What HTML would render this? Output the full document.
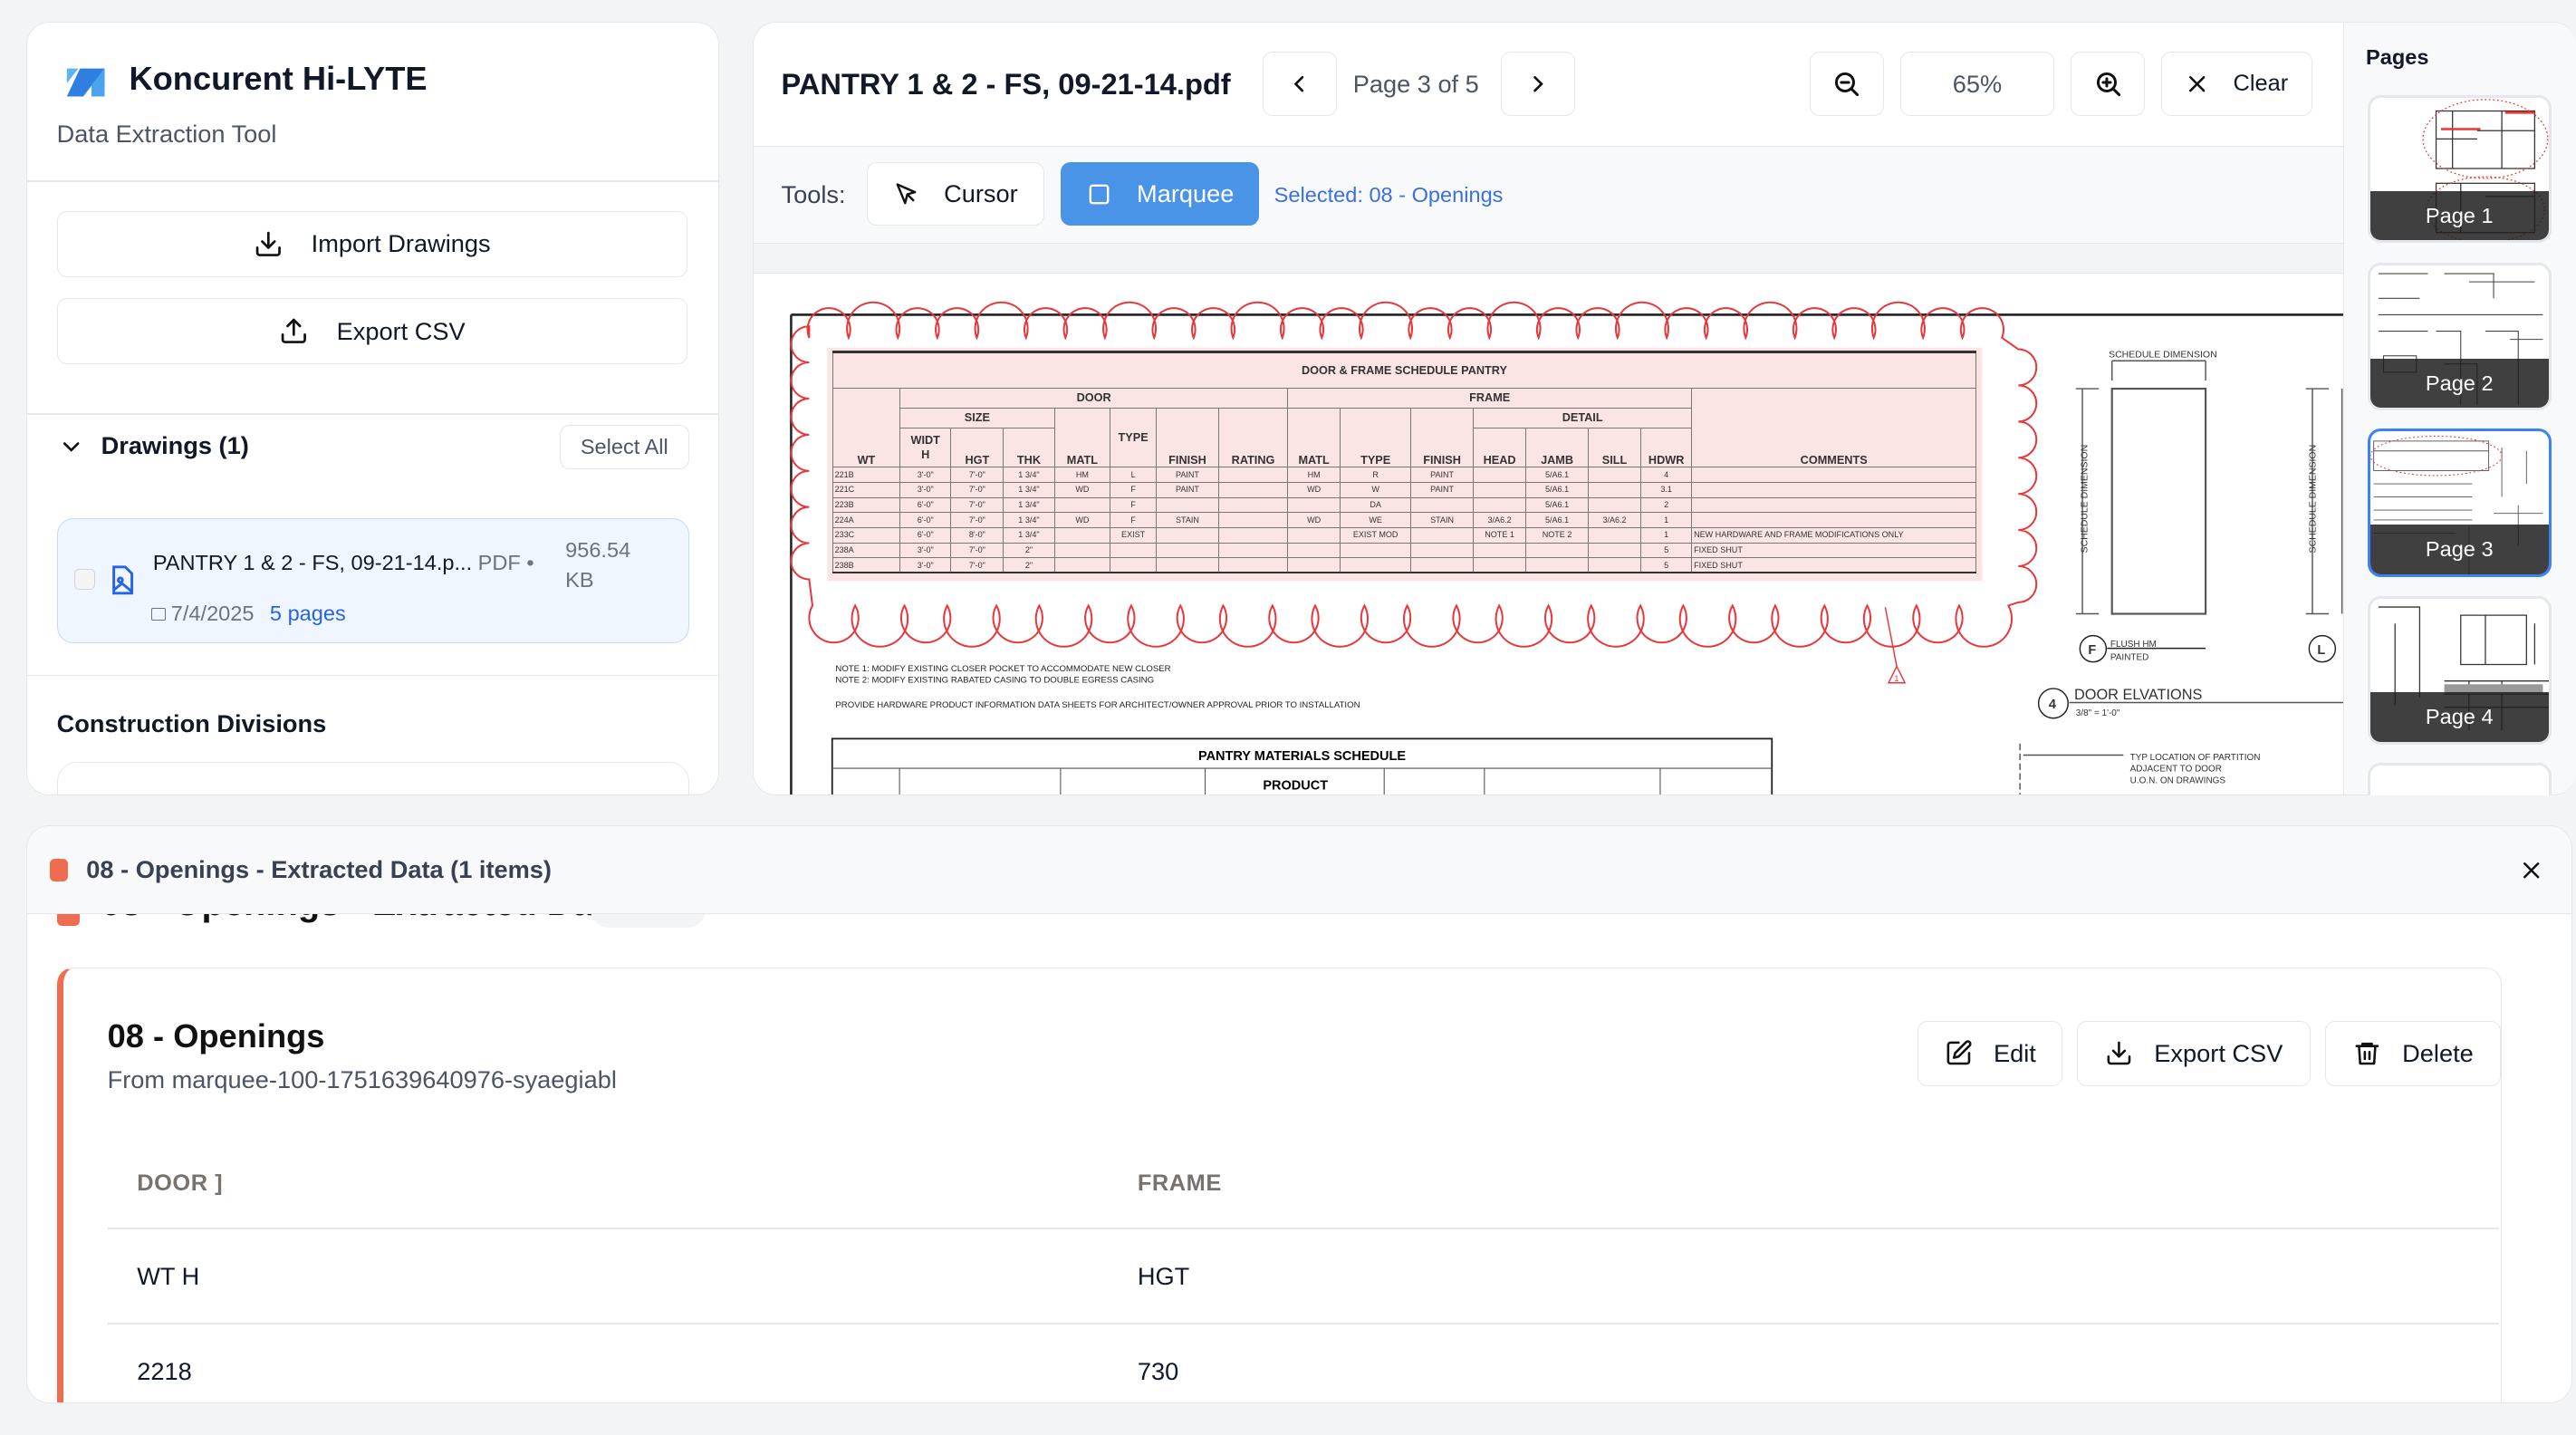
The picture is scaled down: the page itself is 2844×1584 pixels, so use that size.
<!DOCTYPE html>
<html><head><meta charset="utf-8">
<style>
*{box-sizing:border-box;margin:0;padding:0}
html,body{width:2844px;height:1584px;overflow:hidden;background:#f3f4f6}
#w{zoom:1.81378;width:1568px;height:874px;position:relative;font-family:"Liberation Sans",sans-serif;color:#111827}
.a{position:absolute}
.card{position:absolute;background:#fff;border:1px solid #e5e7eb;border-radius:14px;overflow:hidden}
.btn{position:absolute;background:#fff;border:1px solid #e5e7eb;border-radius:6px;display:flex;align-items:center;justify-content:center;font-size:15px;color:#111827}
.hl{position:absolute;height:1px;background:#e5e7eb}
svg{display:block}
.t{position:absolute;white-space:nowrap}
table.ds{position:absolute;border-collapse:collapse;font-family:"Liberation Sans",sans-serif;font-size:5px;color:#333;background:#fbe5e4;table-layout:fixed}
table.ds td{border:0.5px solid #777;padding:0 1px;height:9.2px;line-height:8px;overflow:hidden;white-space:nowrap;text-align:center}
table.ds tr.h td{font-size:7px;font-weight:bold}
.thumb{position:absolute;left:1441px;width:112px;height:90px;border:2px solid #e5e7eb;border-radius:8px;background:#fff;overflow:hidden}
.thumb .lb{position:absolute;left:0;right:0;bottom:0;height:30px;background:rgba(30,30,30,.85);color:#fff;font-size:13px;text-align:center;line-height:30px}
</style></head><body><div id="w">

<!-- Left card -->
<div class="card" style="left:16px;top:13px;width:422px;height:471px">
  <svg class="a" style="left:23px;top:26px" width="26" height="20" viewBox="0 0 26 20">
    <path d="M1 2h7l-7 9z" fill="#5bb6ef"/><path d="M9 2h15L11 19H1z" fill="#2f7fe0"/><path d="M16 12l8-10v17h-8z" fill="#4aa3ec"/>
  </svg>
  <div class="t" style="left:62px;top:23px;font-size:20px;font-weight:600;color:#111827">Koncurent Hi-LYTE</div>
  <div class="t" style="left:18px;top:59px;font-size:15px;color:#4b5563">Data Extraction Tool</div>
  <div class="hl" style="left:0;right:0;top:96px"></div>
  <div class="btn" style="left:18px;top:115px;width:384px;height:40px">
    <svg width="18" height="18" viewBox="0 0 24 24" fill="none" stroke="#111" stroke-width="2" stroke-linecap="round" stroke-linejoin="round" style="margin-right:17px"><path d="M21 15v4a2 2 0 0 1-2 2H5a2 2 0 0 1-2-2v-4"/><path d="M7 10l5 5 5-5"/><path d="M12 15V3"/></svg>Import Drawings</div>
  <div class="btn" style="left:18px;top:168px;width:384px;height:40px">
    <svg width="18" height="18" viewBox="0 0 24 24" fill="none" stroke="#111" stroke-width="2" stroke-linecap="round" stroke-linejoin="round" style="margin-right:17px"><path d="M21 15v4a2 2 0 0 1-2 2H5a2 2 0 0 1-2-2v-4"/><path d="M17 8l-5-5-5 5"/><path d="M12 3v12"/></svg>Export CSV</div>
  <div class="hl" style="left:0;right:0;top:238px"></div>
  <svg class="a" style="left:20px;top:251px" width="14" height="14" viewBox="0 0 24 24" fill="none" stroke="#111" stroke-width="2.5" stroke-linecap="round"><path d="M5 9l7 7 7-7"/></svg>
  <div class="t" style="left:45px;top:249px;font-size:15px;font-weight:600">Drawings (1)</div>
  <div class="btn" style="left:324px;top:245px;width:79px;height:27px;font-size:13px;color:#4b5563">Select All</div>
  <div class="a" style="left:18px;top:302px;width:385px;height:76px;background:#eff6ff;border:1px solid #bfdbfe;border-radius:10px">
    <div class="a" style="left:10px;top:30px;width:13px;height:13px;border:1px solid #d1d5db;border-radius:3px;background:#f3f4f6"></div>
    <svg class="a" style="left:32px;top:28px" width="15" height="18" viewBox="0 0 15 18" fill="none" stroke="#2563eb" stroke-width="1.6"><path d="M2 1h7l4 4v12H2z"/><circle cx="6" cy="9" r="1.3"/><path d="M2 15l5-4 6 5"/></svg>
    <div class="t" style="left:58px;top:19px;font-size:13px;color:#111827">PANTRY 1 &amp; 2 - FS, 09-21-14.p...<span style="color:#6b7280"> PDF •</span></div>
    <div class="t" style="left:309px;top:10px;font-size:13px;color:#6b7280;line-height:18px">956.54<br>KB</div>
    <div class="t" style="left:57px;top:50px;font-size:13px;color:#6b7280"><span style="display:inline-block;width:9px;height:8px;border:1px solid #6b7280;border-radius:1px;margin-right:3px"></span>7/4/2025 <span style="color:#2563eb;margin-left:6px">5 pages</span></div>
  </div>
  <div class="hl" style="left:0;right:0;top:397px"></div>
  <div class="t" style="left:18px;top:418px;font-size:15px;font-weight:600">Construction Divisions</div>
  <div class="a" style="left:18px;top:450px;width:385px;height:40px;border:1px solid #e5e7eb;border-radius:12px"></div>
</div>

<!-- Main card -->
<div class="card" style="left:458px;top:13px;width:1110px;height:471px;border-right:none">
  <div class="t" style="left:17px;top:27px;font-size:18px;font-weight:600">PANTRY 1 &amp; 2 - FS, 09-21-14.pdf</div>
  <div class="btn" style="left:310px;top:18px;width:45px;height:39px"><svg width="14" height="14" viewBox="0 0 24 24" fill="none" stroke="#111" stroke-width="2.5" stroke-linecap="round"><path d="M15 5l-7 7 7 7"/></svg></div>
  <div class="t" style="left:365px;top:29px;font-size:15px;color:#4b5563">Page 3 of 5</div>
  <div class="btn" style="left:455px;top:18px;width:45px;height:39px"><svg width="14" height="14" viewBox="0 0 24 24" fill="none" stroke="#111" stroke-width="2.5" stroke-linecap="round"><path d="M9 5l7 7-7 7"/></svg></div>
  <div class="btn" style="left:643px;top:18px;width:45px;height:39px"><svg width="18" height="18" viewBox="0 0 24 24" fill="none" stroke="#111" stroke-width="2.2" stroke-linecap="round"><circle cx="11" cy="11" r="7"/><path d="M8 11h6M16 16l5 5"/></svg></div>
  <div class="btn" style="left:698px;top:18px;width:94px;height:39px;color:#4b5563">65%</div>
  <div class="btn" style="left:802px;top:18px;width:45px;height:39px"><svg width="18" height="18" viewBox="0 0 24 24" fill="none" stroke="#111" stroke-width="2.2" stroke-linecap="round"><circle cx="11" cy="11" r="7"/><path d="M8 11h6M11 8v6M16 16l5 5"/></svg></div>
  <div class="btn" style="left:857px;top:18px;width:92px;height:39px;font-size:14px"><svg width="14" height="14" viewBox="0 0 24 24" fill="none" stroke="#111" stroke-width="2.4" stroke-linecap="round" style="margin-right:15px"><path d="M5 5l14 14M19 5L5 19"/></svg>Clear</div>
  <div class="a" style="left:0;top:75px;width:968px;height:60px;background:#f8f9fa;border-top:1px solid #e5e7eb;border-bottom:1px solid #e5e7eb"></div>
  <div class="t" style="left:17px;top:96px;font-size:15px;color:#374151">Tools:</div>
  <div class="btn" style="left:69px;top:85px;width:108px;height:39px"><svg width="16" height="16" viewBox="0 0 24 24" fill="none" stroke="#111" stroke-width="2" stroke-linejoin="round" style="margin-right:15px"><path d="M4 3l16 7-7 2-2 8z"/><path d="M13 12l6 6"/></svg>Cursor</div>
  <div class="btn" style="left:187px;top:85px;width:121px;height:39px;background:#4a94e8;border-color:#4a94e8;color:#fff"><svg width="16" height="16" viewBox="0 0 24 24" fill="none" stroke="#fff" stroke-width="2" style="margin-right:15px"><rect x="4" y="4" width="16" height="16" rx="2"/></svg>Marquee</div>
  <div class="t" style="left:317px;top:98px;font-size:13px;color:#3b6fe0">Selected: 08 - Openings</div>
  <div class="a" style="left:0;top:135px;width:968px;height:18px;background:#f3f4f6;border-bottom:1px solid #e5e7eb"></div>

  <!-- drawing -->
  <div class="a" style="left:0;top:153px;width:968px;height:318px;overflow:hidden;background:#fff">
    <svg class="a" style="left:-458px;top:-166px" width="1426" height="490" viewBox="0 0 1426 490">
      <path d="M481 191H1426M481 191V490" stroke="#222" stroke-width="1.4" fill="none"/>
      <rect x="503" y="211" width="703" height="142" fill="#fbe5e4"/>
      <path id="cloud" d="" fill="none" stroke="#e8363a" stroke-width="1.1"/>
      <path d="M1147 369L1154 405" stroke="#e8363a" stroke-width="0.8"/>
      <path d="M1154 405l-5 10h10z" fill="none" stroke="#e8363a" stroke-width="0.8"/>
      <text x="1152.5" y="414" font-size="5" fill="#e8363a">1</text>
      <g font-family="Liberation Sans" font-size="5.3" fill="#222">
        <text x="508" y="408">NOTE 1: MODIFY EXISTING CLOSER POCKET TO ACCOMMODATE NEW CLOSER</text>
        <text x="508" y="415">NOTE 2: MODIFY EXISTING RABATED CASING TO DOUBLE EGRESS CASING</text>
        <text x="508" y="430">PROVIDE HARDWARE PRODUCT INFORMATION DATA SHEETS FOR ARCHITECT/OWNER APPROVAL PRIOR TO INSTALLATION</text>
      </g>
      <rect x="506" y="449" width="572" height="50" fill="none" stroke="#222" stroke-width="1"/>
      <path d="M506 467H1078M547 467V490M645 467V490M733 467V490M842 467V490M903 467V490M1010 467V490" stroke="#555" stroke-width="0.6"/>
      <text x="792" y="462" font-size="8" font-weight="bold" text-anchor="middle" font-family="Liberation Sans">PANTRY MATERIALS SCHEDULE</text>
      <text x="788" y="480" font-size="8" font-weight="bold" text-anchor="middle" font-family="Liberation Sans">PRODUCT</text>
      <g stroke="#555" fill="none" stroke-width="0.8">
        <rect x="1285" y="236" width="57" height="137" stroke-width="1.2"/>
        <path d="M1285 219h57M1285 219v12M1342 219v12M1267 236v137M1263 236h14M1263 373h14"/>
        <path d="M1407 236v137M1403 236h14M1403 373h14M1425 236v137"/>
        <circle cx="1273.5" cy="394.3" r="8" stroke="#222"/>
        <path d="M1282 394h60" stroke="#222"/>
        <circle cx="1413" cy="394.3" r="8" stroke="#222"/>
        <circle cx="1249.3" cy="427.5" r="9" stroke="#222"/>
        <path d="M1259 427h167"/>
        <path d="M1229 452v40" stroke-dasharray="4 2"/>
        <path d="M1231 459h61"/>
      </g>
      <g font-family="Liberation Sans" fill="#333">
        <text x="1283" y="217" font-size="5.8">SCHEDULE DIMENSION</text>
        <text x="1270" y="336" font-size="5.8" transform="rotate(-90 1270 336)">SCHEDULE DIMENSION</text>
        <text x="1409" y="336" font-size="5.8" transform="rotate(-90 1409 336)">SCHEDULE DIMENSION</text>
        <text x="1270.5" y="397.5" font-size="8" font-weight="bold">F</text>
        <text x="1410" y="397.5" font-size="8" font-weight="bold">L</text>
        <text x="1284" y="393" font-size="5.5">FLUSH HM</text>
        <text x="1284" y="401" font-size="5.5">PAINTED</text>
        <text x="1246.5" y="430.5" font-size="8" font-weight="bold">4</text>
        <text x="1262" y="425" font-size="9">DOOR ELVATIONS</text>
        <text x="1263" y="435" font-size="5.5">3/8" = 1'-0"</text>
        <text x="1296" y="462" font-size="5.5">TYP LOCATION OF PARTITION</text>
        <text x="1296" y="469" font-size="5.5">ADJACENT TO DOOR</text>
        <text x="1296" y="476" font-size="5.5">U.O.N. ON DRAWINGS</text>
      </g>
    </svg>
    <table class="ds" style="left:48px;top:47px;width:696px">
      <colgroup><col style="width:41px"><col style="width:31px"><col style="width:32px"><col style="width:31px"><col style="width:34px"><col style="width:28px"><col style="width:38px"><col style="width:42px"><col style="width:32px"><col style="width:43px"><col style="width:38px"><col style="width:32px"><col style="width:38px"><col style="width:32px"><col style="width:31px"><col style="width:173px"></colgroup>
      <tr class="h"><td colspan="16" style="height:22px;border-top:2px solid #333">DOOR &amp; FRAME SCHEDULE PANTRY</td></tr>
      <tr class="h"><td rowspan="3" style="vertical-align:bottom">WT</td><td colspan="7" style="height:12px">DOOR</td><td colspan="7">FRAME</td><td rowspan="3" style="vertical-align:bottom">COMMENTS</td></tr>
      <tr class="h"><td colspan="3" style="height:12px">SIZE</td><td rowspan="2" style="vertical-align:bottom">MATL</td><td rowspan="2">TYPE</td><td rowspan="2" style="vertical-align:bottom">FINISH</td><td rowspan="2" style="vertical-align:bottom">RATING</td><td rowspan="2" style="vertical-align:bottom">MATL</td><td rowspan="2" style="vertical-align:bottom">TYPE</td><td rowspan="2" style="vertical-align:bottom">FINISH</td><td colspan="4">DETAIL</td></tr>
      <tr class="h"><td style="height:24px;line-height:9px">WIDT<br>H</td><td style="vertical-align:bottom">HGT</td><td style="vertical-align:bottom">THK</td><td style="vertical-align:bottom">HEAD</td><td style="vertical-align:bottom">JAMB</td><td style="vertical-align:bottom">SILL</td><td style="vertical-align:bottom">HDWR</td></tr>
      <tr><td style="text-align:left">221B</td><td>3'-0"</td><td>7'-0"</td><td>1 3/4"</td><td>HM</td><td>L</td><td>PAINT</td><td></td><td>HM</td><td>R</td><td>PAINT</td><td></td><td>5/A6.1</td><td></td><td>4</td><td></td></tr>
      <tr><td style="text-align:left">221C</td><td>3'-0"</td><td>7'-0"</td><td>1 3/4"</td><td>WD</td><td>F</td><td>PAINT</td><td></td><td>WD</td><td>W</td><td>PAINT</td><td></td><td>5/A6.1</td><td></td><td>3.1</td><td></td></tr>
      <tr><td style="text-align:left">223B</td><td>6'-0"</td><td>7'-0"</td><td>1 3/4"</td><td></td><td>F</td><td></td><td></td><td></td><td>DA</td><td></td><td></td><td>5/A6.1</td><td></td><td>2</td><td></td></tr>
      <tr><td style="text-align:left">224A</td><td>6'-0"</td><td>7'-0"</td><td>1 3/4"</td><td>WD</td><td>F</td><td>STAIN</td><td></td><td>WD</td><td>WE</td><td>STAIN</td><td>3/A6.2</td><td>5/A6.1</td><td>3/A6.2</td><td>1</td><td></td></tr>
      <tr><td style="text-align:left">233C</td><td>6'-0"</td><td>8'-0"</td><td>1 3/4"</td><td></td><td>EXIST</td><td></td><td></td><td></td><td>EXIST MOD</td><td></td><td>NOTE 1</td><td>NOTE 2</td><td></td><td>1</td><td style="text-align:left">NEW HARDWARE AND FRAME MODIFICATIONS ONLY</td></tr>
      <tr><td style="text-align:left">238A</td><td>3'-0"</td><td>7'-0"</td><td>2"</td><td></td><td></td><td></td><td></td><td></td><td></td><td></td><td></td><td></td><td></td><td>5</td><td style="text-align:left">FIXED SHUT</td></tr>
      <tr><td style="text-align:left;border-bottom:1.5px solid #333">238B</td><td style="border-bottom:1.5px solid #333">3'-0"</td><td style="border-bottom:1.5px solid #333">7'-0"</td><td style="border-bottom:1.5px solid #333">2"</td><td style="border-bottom:1.5px solid #333"></td><td style="border-bottom:1.5px solid #333"></td><td style="border-bottom:1.5px solid #333"></td><td style="border-bottom:1.5px solid #333"></td><td style="border-bottom:1.5px solid #333"></td><td style="border-bottom:1.5px solid #333"></td><td style="border-bottom:1.5px solid #333"></td><td style="border-bottom:1.5px solid #333"></td><td style="border-bottom:1.5px solid #333"></td><td style="border-bottom:1.5px solid #333"></td><td style="border-bottom:1.5px solid #333">5</td><td style="text-align:left;border-bottom:1.5px solid #333">FIXED SHUT</td></tr>
    </table>
  </div>

  <div class="a" style="left:968px;top:0;width:142px;height:471px;background:#f8f9fa;border-left:1px solid #e5e7eb">
    <div class="t" style="left:13px;top:14px;font-size:13px;font-weight:600">Pages</div>
  </div>
</div>

<div class="thumb" style="top:58px"><svg width="112" height="90"><g stroke="#333" stroke-width="0.7" fill="none"><rect x="40" y="8" width="60" height="35"/><path d="M50 8v35M65 20h35M80 8v35M40 25h25"/><rect x="40" y="52" width="60" height="30"/><path d="M55 52v30M70 60h30"/></g><g stroke="#e33" stroke-width="0.7" fill="none" stroke-dasharray="1 1.5"><ellipse cx="70" cy="25" rx="38" ry="24"/><ellipse cx="70" cy="68" rx="36" ry="20"/></g><path d="M43 19h24M82 9h18" stroke="#e33" stroke-width="1.4"/></svg><div class="lb">Page 1</div></div>
<div class="thumb" style="top:160px"><svg width="112" height="90"><g stroke="#444" stroke-width="0.6" fill="none"><path d="M5 5h30M45 5h30v15M5 20h25M5 40h30M40 40h15v45M45 60h20v25M70 40h20v45M85 45h20"/><rect x="8" y="55" width="20" height="10"/><path d="M5 30h100M60 10h40"/></g></svg><div class="lb">Page 2</div></div>
<div class="thumb" style="top:261px;border-color:#3b82f6"><svg width="112" height="90"><g stroke="#555" stroke-width="0.5" fill="none"><rect x="2" y="6" width="70" height="18"/><path d="M2 12h70M2 32h60M2 40h60M2 48h60M2 54h60M80 10v30M95 12v20M75 50h30M90 45v25M2 62h50M60 58v30"/></g><ellipse cx="40" cy="15" rx="40" ry="12" fill="none" stroke="#e33" stroke-width="0.6" stroke-dasharray="1 1.5"/></svg><div class="lb">Page 3</div></div>
<div class="thumb" style="top:363px"><svg width="112" height="90"><g stroke="#333" stroke-width="0.7" fill="none"><path d="M5 5h25v55M15 15v50M55 10h40v30H55zM70 10v30M100 15v25M45 50h65M45 58h65M45 66h65M60 50v30M80 50v30"/></g><rect x="45" y="52" width="60" height="6" fill="#999"/></svg><div class="lb">Page 4</div></div>
<div class="thumb" style="top:464px;height:20px;border-bottom:none;border-radius:8px 8px 0 0"></div>

<!-- bottom panel -->
<div class="card" style="left:16px;top:502px;width:1550px;height:352px">
  <div class="a" style="left:0;top:0;right:0;height:54px;background:#f8f9fa;border-bottom:1px solid #e5e7eb;z-index:2">
    <div class="a" style="left:14px;top:20px;width:11px;height:14px;background:#ef6c50;border-radius:3px"></div>
    <div class="t" style="left:36px;top:18px;font-size:15px;font-weight:600;color:#374151">08 - Openings - Extracted Data (1 items)</div>
    <svg class="a" style="left:1517px;top:20px" width="14" height="14" viewBox="0 0 24 24" fill="none" stroke="#111" stroke-width="2.4" stroke-linecap="round"><path d="M5 5l14 14M19 5L5 19"/></svg>
  </div>
  <div class="a" style="left:18px;top:38px;width:14px;height:23px;background:#ef6c50;border-radius:3px"></div>
  <div class="t" style="left:45px;top:35px;font-size:22px;font-weight:bold;color:#111">08 - Openings - Extracted Data</div>
  <div class="a" style="left:343px;top:40px;width:70px;height:22px;background:#f3f4f6;border-radius:11px;font-size:12px;text-align:center;line-height:16px">1 items</div>
  <div class="a" style="left:18px;top:86px;width:1488px;height:300px;border:1px solid #e5e7eb;border-left:4px solid #ef6c50;border-radius:10px">
    <div class="t" style="left:27px;top:30px;font-size:20px;font-weight:600;color:#111">08 - Openings</div>
    <div class="t" style="left:27px;top:59px;font-size:15px;color:#4b5563">From marquee-100-1751639640976-syaegiabl</div>
    <div class="btn" style="left:1129px;top:32px;width:88px;height:40px"><svg width="17" height="17" viewBox="0 0 24 24" fill="none" stroke="#111" stroke-width="2" stroke-linecap="round" stroke-linejoin="round" style="margin-right:13px"><path d="M12 3H5a2 2 0 0 0-2 2v14a2 2 0 0 0 2 2h14a2 2 0 0 0 2-2v-7"/><path d="M18.4 2.6a2.1 2.1 0 0 1 3 3L12 15l-4 1 1-4z"/></svg>Edit</div>
    <div class="btn" style="left:1226px;top:32px;width:142px;height:40px"><svg width="17" height="17" viewBox="0 0 24 24" fill="none" stroke="#111" stroke-width="2" stroke-linecap="round" stroke-linejoin="round" style="margin-right:13px"><path d="M21 15v4a2 2 0 0 1-2 2H5a2 2 0 0 1-2-2v-4"/><path d="M7 10l5 5 5-5"/><path d="M12 15V3"/></svg>Export CSV</div>
    <div class="btn" style="left:1377px;top:32px;width:107px;height:40px"><svg width="17" height="17" viewBox="0 0 24 24" fill="none" stroke="#111" stroke-width="2" stroke-linecap="round" stroke-linejoin="round" style="margin-right:13px"><path d="M3 6h18M8 6V4h8v2M5 6l1 15h12l1-15M10 11v6M14 11v6"/></svg>Delete</div>
    <div class="t" style="left:45px;top:123px;font-size:14px;font-weight:600;color:#78716c;letter-spacing:.3px">DOOR ]</div>
    <div class="t" style="left:654px;top:123px;font-size:14px;font-weight:600;color:#78716c;letter-spacing:.3px">FRAME</div>
    <div class="hl" style="left:27px;width:1456px;top:158px"></div>
    <div class="t" style="left:45px;top:179px;font-size:15px">WT H</div>
    <div class="t" style="left:654px;top:179px;font-size:15px">HGT</div>
    <div class="hl" style="left:27px;width:1456px;top:216px"></div>
    <div class="t" style="left:45px;top:237px;font-size:15px">2218</div>
    <div class="t" style="left:654px;top:237px;font-size:15px">730</div>
  </div>
</div>

</div>
<script>
(function(){
 var x,y,d,i=0;
 x=492;y=205;d="M"+x+" "+y;
 while(x<1215){var w=(i%3==1)?30:24;var r=(i%3==1)?16:13;d+=" A"+r+" "+r+" 0 1 1 "+(x+w)+" "+y;x+=w;i++;}
 d+=" L1228 212";x=1228;y=212;
 while(y<350){d+=" A11 11 0 0 1 "+x+" "+(y+22);y+=22;}
 d+=" L1222 368";x=1222;y=368;i=0;
 while(x>505){var w2=(i%2==0)?30:26;var r2=(i%2==0)?17:15;d+=" A"+r2+" "+r2+" 0 1 1 "+(x-w2)+" "+y;x-=w2;i++;}
 d+=" L492 352";x=492;y=352;
 while(y>215){d+=" A11 11 0 0 1 "+x+" "+(y-22);y-=22;}
 d+=" Z";
 document.getElementById("cloud").setAttribute("d",d);
})();
</script>
</body></html>
